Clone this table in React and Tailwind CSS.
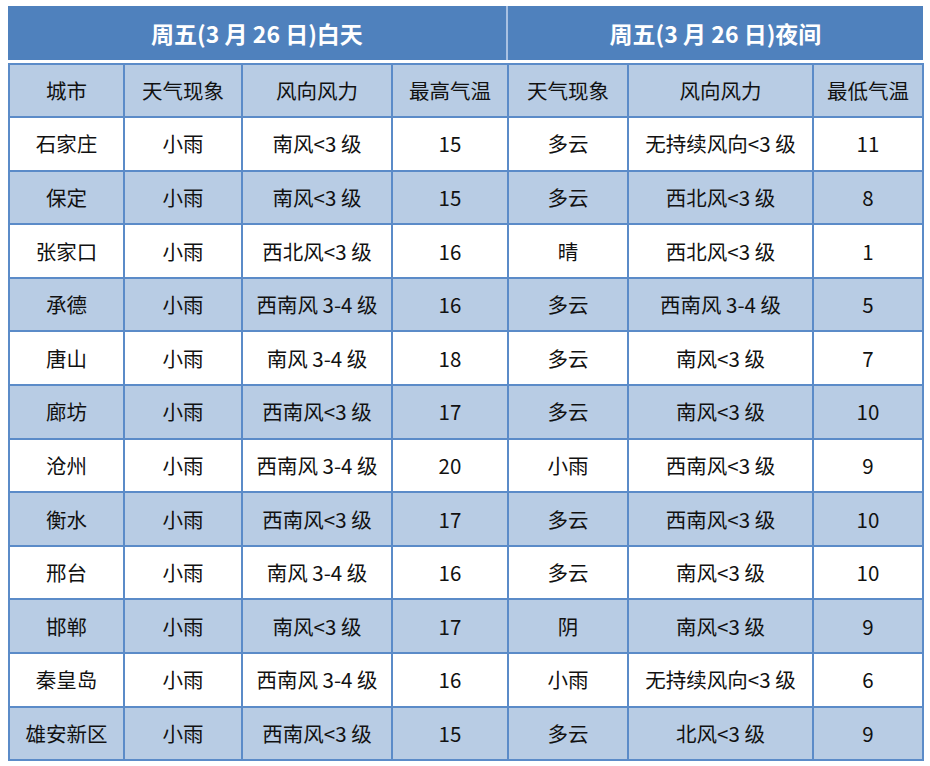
const rows = [
  ["石家庄", "小雨", "南风<3 级", "15", "多云", "无持续风向<3 级", "11"],
  ["保定", "小雨", "南风<3 级", "15", "多云", "西北风<3 级", "8"],
  ["张家口", "小雨", "西北风<3 级", "16", "晴", "西北风<3 级", "1"],
  ["承德", "小雨", "西南风 3-4 级", "16", "多云", "西南风 3-4 级", "5"],
  ["唐山", "小雨", "南风 3-4 级", "18", "多云", "南风<3 级", "7"],
  ["廊坊", "小雨", "西南风<3 级", "17", "多云", "南风<3 级", "10"],
  ["沧州", "小雨", "西南风 3-4 级", "20", "小雨", "西南风<3 级", "9"],
  ["衡水", "小雨", "西南风<3 级", "17", "多云", "西南风<3 级", "10"],
  ["邢台", "小雨", "南风 3-4 级", "16", "多云", "南风<3 级", "10"],
  ["邯郸", "小雨", "南风<3 级", "17", "阴", "南风<3 级", "9"],
  ["秦皇岛", "小雨", "西南风 3-4 级", "16", "小雨", "无持续风向<3 级", "6"],
  ["雄安新区", "小雨", "西南风<3 级", "15", "多云", "北风<3 级", "9"],
];

const heads = ["城市", "天气现象", "风向风力", "最高气温", "天气现象", "风向风力", "最低气温"];
const widths = [115, 118, 150, 116, 120, 185, 110];

export default function App() {
  return (
    <div
      className="w-[930px] h-[766px] bg-white pt-[6px] pl-[8px]"
      style={{ fontFamily: '"Noto Sans CJK SC", "Noto Sans", sans-serif' }}
    >
      <div className="w-[915px]">
        <div className="flex h-[54px] bg-[#4f81bd] text-white font-bold text-[23px]">
          <div className="w-[498px] flex items-center justify-center">周五(3 月 26 日)白天</div>
          <div className="w-[2px] bg-[#a9c1e2]"></div>
          <div className="flex-1 flex items-center justify-center">周五(3 月 26 日)夜间</div>
        </div>
        <div className="h-[3px] bg-white"></div>
        <table className="w-[915px] border-collapse table-fixed text-[20.5px] text-[#111]">
          <colgroup>
            {widths.map((w, i) => (
              <col key={i} style={{ width: w }} />
            ))}
          </colgroup>
          <thead>
            <tr className="h-[53px] bg-[#b8cce4]">
              {heads.map((h, i) => (
                <th key={i} className="border-2 border-[#5b8bc8] font-normal text-center">{h}</th>
              ))}
            </tr>
          </thead>
          <tbody>
            {rows.map((r, ri) => (
              <tr key={ri} className={ri % 2 === 0 ? "h-[53.6px] bg-white" : "h-[53.6px] bg-[#b8cce4]"}>
                {r.map((c, ci) => (
                  <td key={ci} className="border-2 border-[#5b8bc8] text-center whitespace-nowrap p-0">{c}</td>
                ))}
              </tr>
            ))}
          </tbody>
        </table>
      </div>
    </div>
  );
}
